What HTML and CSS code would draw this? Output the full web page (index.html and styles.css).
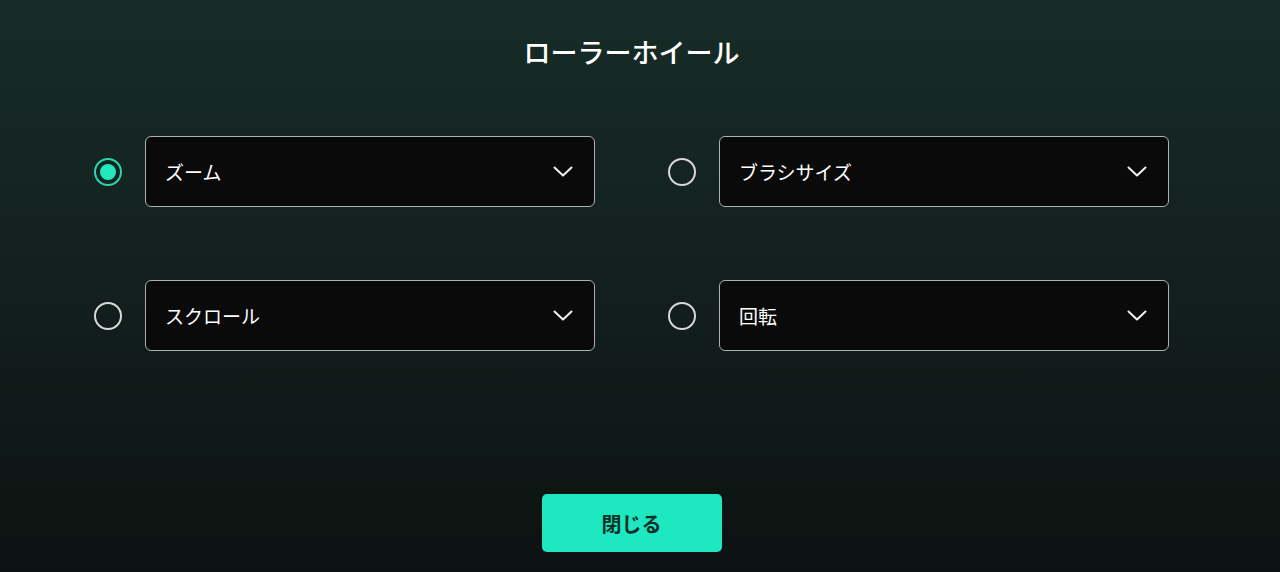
FILE: index.html
```html
<!DOCTYPE html>
<html lang="ja">
<head>
<meta charset="utf-8">
<link rel="stylesheet" href="styles.css">
</head>
<body>
<div class="page">
  <h1 class="title">ローラーホイール</h1>
  <div class="grid">
    <div class="option">
      <span class="radio checked"></span>
      <div class="select"><span>ズーム</span><svg class="chev" viewBox="0 0 20 11"><path d="M1.5 1.5 L10 9.5 L18.5 1.5" /></svg></div>
    </div>
    <div class="option">
      <span class="radio"></span>
      <div class="select"><span>ブラシサイズ</span><svg class="chev" viewBox="0 0 20 11"><path d="M1.5 1.5 L10 9.5 L18.5 1.5" /></svg></div>
    </div>
    <div class="option">
      <span class="radio"></span>
      <div class="select"><span>スクロール</span><svg class="chev" viewBox="0 0 20 11"><path d="M1.5 1.5 L10 9.5 L18.5 1.5" /></svg></div>
    </div>
    <div class="option">
      <span class="radio"></span>
      <div class="select"><span>回転</span><svg class="chev" viewBox="0 0 20 11"><path d="M1.5 1.5 L10 9.5 L18.5 1.5" /></svg></div>
    </div>
  </div>
  <button class="close">閉じる</button>
</div>
</body>
</html>
```

FILE: styles.css
```css
* { box-sizing: border-box; }
html, body {
  margin: 0;
  height: 572px;
  overflow: hidden;
}
body {
  background: linear-gradient(180deg, #172c27 0%, #13211e 45%, #0c1211 100%);
  font-family: "Noto Sans CJK JP", "Noto Sans", sans-serif;
  color: #fff;
}
.page {
  width: 1075px;
  margin-left: 94px;
  display: flex;
  flex-direction: column;
  align-items: center;
  padding-top: 32px;
}
.title {
  margin: 0;
  font-size: 27px;
  line-height: 40px;
  font-weight: 500;
  color: #fff;
}
.grid {
  margin-top: 64px;
  width: 100%;
  display: grid;
  grid-template-columns: 501px 501px;
  column-gap: 73px;
  row-gap: 73px;
}
.option {
  display: flex;
  align-items: center;
  gap: 23px;
}
.radio {
  flex: none;
  width: 28px;
  height: 28px;
  border-radius: 50%;
  border: 2px solid #d8d8d8;
  position: relative;
}
.radio.checked {
  border-color: #27d8ae;
}
.radio.checked::after {
  content: "";
  position: absolute;
  left: 4px;
  top: 4px;
  width: 16px;
  height: 16px;
  border-radius: 50%;
  background: #22eabb;
}
.select {
  width: 450px;
  height: 71px;
  background: #0a0a0a;
  border: 1.5px solid #adb0ae;
  border-radius: 6px;
  display: flex;
  align-items: center;
  justify-content: space-between;
  padding: 0 21px 0 19px;
  font-size: 19px;
  color: #fff;
}
.chev {
  width: 20px;
  height: 11px;
}
.chev path {
  fill: none;
  stroke: #f2f2f2;
  stroke-width: 2;
  stroke-linecap: round;
  stroke-linejoin: round;
}
.close {
  margin-top: 143px;
  width: 180px;
  height: 58px;
  border: none;
  border-radius: 5px;
  background: #1de8c0;
  color: #12302a;
  font-family: "Noto Sans CJK JP", "Noto Sans", sans-serif;
  font-size: 20px;
  font-weight: 700;
  cursor: pointer;
}
```
